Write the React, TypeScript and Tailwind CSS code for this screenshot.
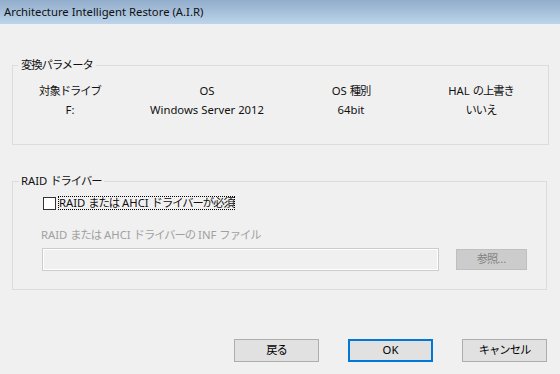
import React from "react";

const font = { fontFamily: '"Noto Sans", "Noto Sans CJK JP", sans-serif' };

function J({ children }: { children: React.ReactNode }) {
  return <span className="tracking-[-1px]">{children}</span>;
}

function Btn({ children, primary }: { children: React.ReactNode; primary?: boolean }) {
  return (
    <div
      className={
        "w-[85px] h-[23px] flex items-center justify-center bg-[#e1e1e1] text-[11.3px] text-black " +
        (primary ? "border-2 border-[#0078d7]" : "border border-[#adadad]")
      }
    >
      {children}
    </div>
  );
}

export default function App() {
  return (
    <div className="w-[560px] h-[374px] bg-[#f0f0f0] overflow-hidden text-[#111111]" style={font}>
      <div className="h-[24px] bg-gradient-to-b from-[#92adcb] to-[#bcd4ec] flex items-center px-[4px] text-[11.3px]">
        Architecture Intelligent Restore (A.I.R)
      </div>

      <fieldset className="ml-[12px] mt-[33px] w-[537px] border border-[#dcdcdc] px-0 pt-[8px] pb-[25px]">
        <legend className="ml-[5px] px-[3px] text-[11.3px] leading-[16px]">
          <J>変換パラメータ</J>
        </legend>
        <div className="grid grid-cols-[114px_160px_128px_132px] text-[11.3px] leading-[19px] text-center">
          <div>
            <J>対象ドライブ</J>
          </div>
          <div>OS</div>
          <div>
            OS <J>種別</J>
          </div>
          <div>
            HAL <J>の上書き</J>
          </div>
          <div>F:</div>
          <div>Windows Server 2012</div>
          <div>64bit</div>
          <div>
            <J>いいえ</J>
          </div>
        </div>
      </fieldset>

      <fieldset className="ml-[12px] mt-[28px] w-[535px] border border-[#dcdcdc] px-0 pt-[6px] pb-[18px]">
        <legend className="ml-[6px] px-[2px] text-[11.3px] leading-[16px]">
          RAID <J>ドライバー</J>
        </legend>
        <div className="ml-[30px] flex items-center h-[16px] text-[11.3px]">
          <div className="w-[13px] h-[13px] border border-[#333333] bg-white" />
          <span className="ml-[2px] px-[1px] leading-[14px] outline outline-1 outline-dotted outline-[#000000] -outline-offset-1">
            RAID <J>または</J> AHCI <J>ドライバーが必須</J>
          </span>
        </div>
        <div className="ml-[28px] mt-[16px] text-[11.3px] leading-[16px] text-[#a0a0a0]">
          RAID <J>または</J> AHCI <J>ドライバーの</J> INF <J>ファイル</J>
        </div>
        <div className="ml-[29px] mt-[5px] flex items-center">
          <div className="w-[397px] h-[23px] border border-[#cccccc] bg-[#f0f0f0] shadow-[inset_0_0_0_1px_#ffffff]" />
          <div className="ml-[17px] w-[71px] h-[21px] bg-[#cccccc] border border-[#bfbfbf] flex items-center justify-center text-[11.3px] text-[#838383]">
            <J>参照</J>...
          </div>
        </div>
      </fieldset>

      <div className="mt-[49px] pr-[13px] flex justify-end gap-[29px]">
        <Btn>
          <J>戻る</J>
        </Btn>
        <Btn primary>OK</Btn>
        <Btn>
          <J>キャンセル</J>
        </Btn>
      </div>
    </div>
  );
}
